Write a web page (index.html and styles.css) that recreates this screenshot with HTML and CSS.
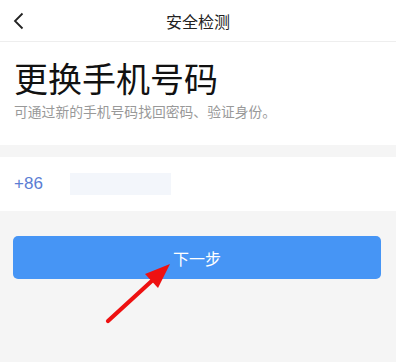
FILE: index.html
```html
<!DOCTYPE html>
<html lang="zh-CN">
<head>
    <meta charset="UTF-8">
    <meta name="viewport" content="width=device-width, initial-scale=1.0">
    <title>安全检测</title>
    <link rel="stylesheet" href="styles.css">
</head>
<body>
    <div class="header">
        <svg class="back" width="12" height="18" viewBox="0 0 12 18">
            <polyline points="9.5,1.5 2,9 9.5,16.5" fill="none" stroke="#222" stroke-width="1.8"/>
        </svg>
        <span class="header-title">安全检测</span>
    </div>

    <div class="intro">
        <h1>更换手机号码</h1>
        <p>可通过新的手机号码找回密码、验证身份。</p>
    </div>

    <div class="phone-row">
        <span class="area-code">+86</span>
        <div class="phone-input"></div>
    </div>

    <div class="actions">
        <button class="next-button">下一步</button>
        <!-- Markierungspfeil -->
        <svg class="pointer" width="80" height="70" viewBox="0 0 80 70">
            <line x1="8" y1="62" x2="55" y2="19" stroke="#ee1111" stroke-width="4.2" stroke-linecap="round"/>
            <polygon points="70,5 45,15 58,29" fill="#ee1111"/>
        </svg>
    </div>
</body>
</html>
```

FILE: styles.css
```css
/* Grundlayout */
body {
    margin: 0;
    font-family: "Noto Sans CJK SC", "Noto Sans", sans-serif;
    background-color: #f5f5f5;
    color: #111;
    height: 362px;
}

/* Kopfzeile */
.header {
    position: relative;
    height: 41px;
    background-color: #ffffff;
    border-bottom: 1px solid #eeeeee;
    display: flex;
    align-items: center;
    justify-content: center;
}
.back {
    position: absolute;
    left: 13px;
    top: 12px;
}
.header-title {
    font-size: 16px;
    color: #222;
}

/* Titelbereich */
.intro {
    background-color: #ffffff;
    padding: 14px 14px 25px;
}
.intro h1 {
    margin: 0;
    font-size: 34px;
    font-weight: normal;
    line-height: 44px;
    color: #111;
}
.intro p {
    margin: 2px 0 0;
    font-size: 13.8px;
    line-height: 18px;
    color: #999;
}

/* Telefonnummer */
.phone-row {
    margin-top: 12px;
    height: 54px;
    background-color: #ffffff;
    display: flex;
    align-items: center;
    padding: 0 14px;
}
.area-code {
    font-family: "Liberation Sans", Arial, sans-serif;
    font-size: 17px;
    color: #5b7dd3;
    width: 56px;
}
.phone-input {
    width: 101px;
    height: 22px;
    background-color: #f3f6fb;
}

/* Button */
.actions {
    position: relative;
    padding: 25px 15px 0 13px;
}
.next-button {
    width: 100%;
    height: 43px;
    border: none;
    border-radius: 5px;
    background-color: #4695f5;
    color: #ffffff;
    font-family: "Noto Sans CJK SC", sans-serif;
    font-size: 16px;
}
.pointer {
    position: absolute;
    left: 100px;
    top: 48px;
}
```
